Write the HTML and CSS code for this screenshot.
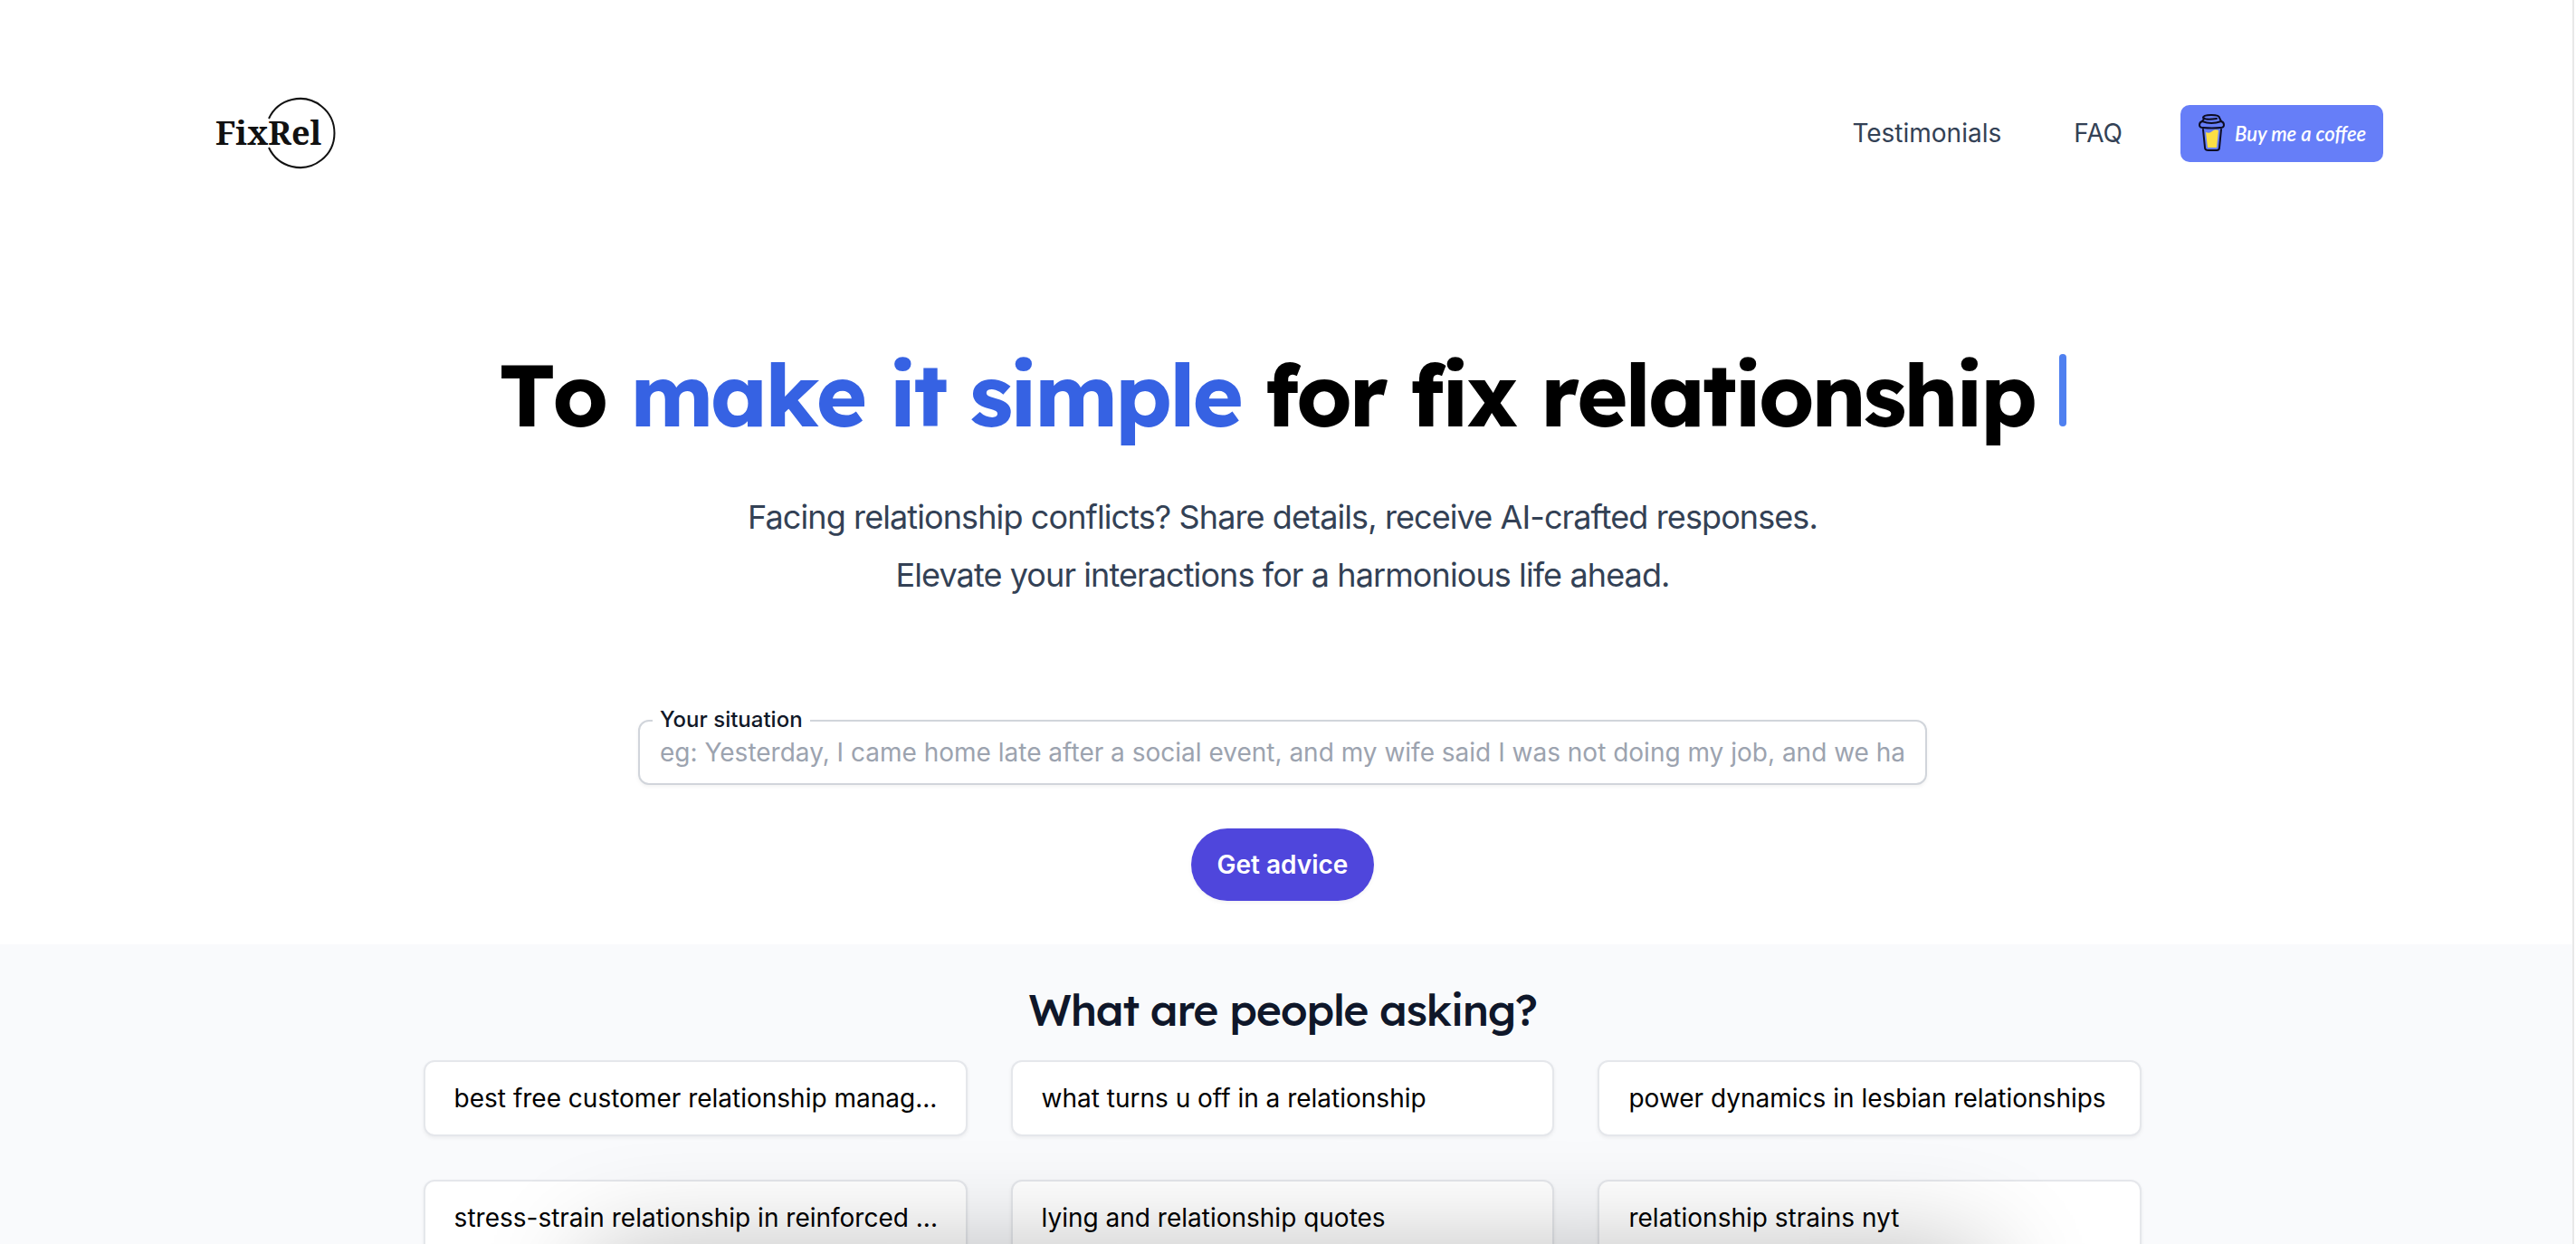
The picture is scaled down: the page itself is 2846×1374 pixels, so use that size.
FILE: index.html
```html
<!DOCTYPE html>
<html lang="en">
<head>
<meta charset="utf-8">
<title>FixRel</title>
<link rel="stylesheet" href="styles.css">
</head>
<body>
<div class="page">
  <header class="header">
    <a class="logo" href="#" aria-label="FixRel">
      <svg width="136" height="80" viewBox="0 0 136 80">
        <path d="M61 24A38 38 0 1 1 61 56" fill="none" stroke="#111" stroke-width="2"/>
        <text class="logo-text" x="2" y="53">FixRel</text>
      </svg>
    </a>
    <nav class="nav">
      <a class="nav-link" href="#testimonials">Testimonials</a>
      <a class="nav-link" href="#faq">FAQ</a>
      <a class="coffee" href="#coffee">
        <svg width="30" height="42" viewBox="0 0 30 42" fill="none" stroke="#0d0c22" stroke-width="2" stroke-linecap="round" stroke-linejoin="round">
          <path d="M8 20q4 2 7-1t7-1l-2 19H10z" fill="#fbdf44" stroke="none"/>
          <path d="M5 17l2 20q0 3 4 3h9q3 0 3-3l2-20"/>
          <path d="M4 8Q1 9 1 12q0 3 4 3 10 1 19 0 4 0 4-3t-3-4Q14 12 4 8z"/>
          <path d="M20 5Q8 7 5 4q0-3 9-3 9 0 9 3l2 4M4 8l2-3"/>
        </svg>
        <span>Buy me a coffee</span>
      </a>
    </nav>
  </header>
  <main>
    <section class="hero">
      <h1 class="title">To <span class="accent">make it simple</span> for fix relationship <span class="caret"></span></h1>
      <p class="lead">Facing relationship conflicts? Share details, receive AI-crafted responses.<br>Elevate your interactions for a harmonious life ahead.</p>
      <form class="form">
        <div class="field">
          <label class="label" for="situation">Your situation</label>
          <input class="input" id="situation" type="text" placeholder="eg: Yesterday, I came home late after a social event, and my wife said I was not doing my job, and we ha">
        </div>
        <button class="submit" type="button">Get advice</button>
      </form>
    </section>
    <section class="asking">
      <h2 class="subtitle">What are people asking?</h2>
      <div class="cards">
        <a class="card" href="#1">best free customer relationship manag...</a>
        <a class="card" href="#2">what turns u off in a relationship</a>
        <a class="card" href="#3">power dynamics in lesbian relationships</a>
        <a class="card" href="#4">stress-strain relationship in reinforced ...</a>
        <a class="card" href="#5">lying and relationship quotes</a>
        <a class="card" href="#6">relationship strains nyt</a>
      </div>
    </section>
  </main>
</div>
<div class="dock-shadow"></div>
</body>
</html>
```
FILE: styles.css
```css
* { box-sizing: border-box; }
html { height: 100%; overflow: hidden; }
body {
  margin: 0;
  height: 100%;
  overflow: hidden;
  padding-right: 2px;
  background: #fff;
  color: #000;
  font-family: Inter, "Liberation Sans", sans-serif;
}
a { color: inherit; text-decoration: none; }
.page { min-height: 100%; border-right: 2px solid #e8e8e8; }
.header {
  display: flex;
  align-items: center;
  justify-content: space-between;
  padding: 107px 209px 104px 236px;
}
.logo, .logo svg { display: block; }
.logo-text { font: bold 36px "Noto Serif", "DejaVu Serif Condensed", "Liberation Serif", serif; fill: #111; }
.nav { display: flex; align-items: center; color: #334155; font-size: 28px; line-height: 40px; }
.nav-link { margin-right: 80px; }
.nav-link + .nav-link { margin-right: 64px; }
.coffee {
  display: flex;
  align-items: center;
  gap: 10px;
  width: 224px;
  height: 63px;
  padding-left: 20px;
  border-radius: 10px;
  background: #667ef8;
  color: #fff;
  font: italic 600 22px Lato, sans-serif;
  white-space: nowrap;
}
.hero {
  display: flex;
  flex-direction: column;
  align-items: center;
  padding: 96px 8px 48px 0;
}
.title, .subtitle {
  margin: 0;
  font-family: Lexend, Inter, sans-serif;
  font-weight: 500;
  letter-spacing: -0.025em;
}
.title { font-size: 96px; line-height: 96px; font-weight: 700; font-kerning: none; letter-spacing: -0.035em; white-space: nowrap; }
.accent { color: #3662e3; }
.caret { display: inline-block; width: 8px; height: 80px; border-radius: 4px; background: #4f80f0; }
.lead {
  margin: 56px 0 0;
  color: #334155;
  font-size: 36px;
  line-height: 64px;
  letter-spacing: -0.025em;
  text-align: center;
}
.form { display: flex; flex-direction: column; align-items: center; gap: 48px; width: 100%; max-width: 1424px; margin-top: 128px; }
.field { position: relative; width: 100%; }
.label {
  position: absolute;
  top: -16px;
  left: 16px;
  padding: 0 8px;
  background: #fff;
  color: #111827;
  font-size: 24px;
  font-weight: 500;
  line-height: 32px;
}
.input {
  display: block;
  width: 100%;
  height: 72px;
  padding: 0 16px 0 22px;
  border: 2px solid #d1d5db;
  border-radius: 12px;
  box-shadow: 0 2px 4px rgba(0, 0, 0, .05);
  background: #fff;
  color: #111827;
  font: 28px Inter, sans-serif;
}
.input::placeholder { color: #9ca3af; opacity: 1; }
.submit {
  height: 80px;
  padding: 0 29px;
  border: 0;
  border-radius: 40px;
  background: #4f46dc;
  box-shadow: 0 2px 4px rgba(0, 0, 0, .05);
  color: #fff;
  font: 600 28px Inter, sans-serif;
}
.asking { padding: 40px 8px 96px 0; background: #f9fafc; }
.subtitle { color: #0f172a; font-size: 48px; line-height: 64px; text-align: center; }
.cards {
  display: grid;
  grid-template-columns: repeat(3, minmax(0, 1fr));
  gap: 48px;
  width: 67%;
  margin: 24px auto 0;
}
.card {
  height: 84px;
  padding: 0 24px 0 32px;
  overflow: hidden;
  border: 2px solid #e5e7eb;
  border-radius: 12px;
  background: #fff;
  box-shadow: 0 2px 4px rgba(0, 0, 0, .06);
  font-size: 28px;
  line-height: 80px;
  text-overflow: ellipsis;
  white-space: nowrap;
}
.dock-shadow {
  position: fixed;
  top: 100%;
  left: 23%;
  right: 23%;
  height: 200px;
  box-shadow: 0 12px 120px rgba(0, 0, 0, .3);
  pointer-events: none;
}
```
